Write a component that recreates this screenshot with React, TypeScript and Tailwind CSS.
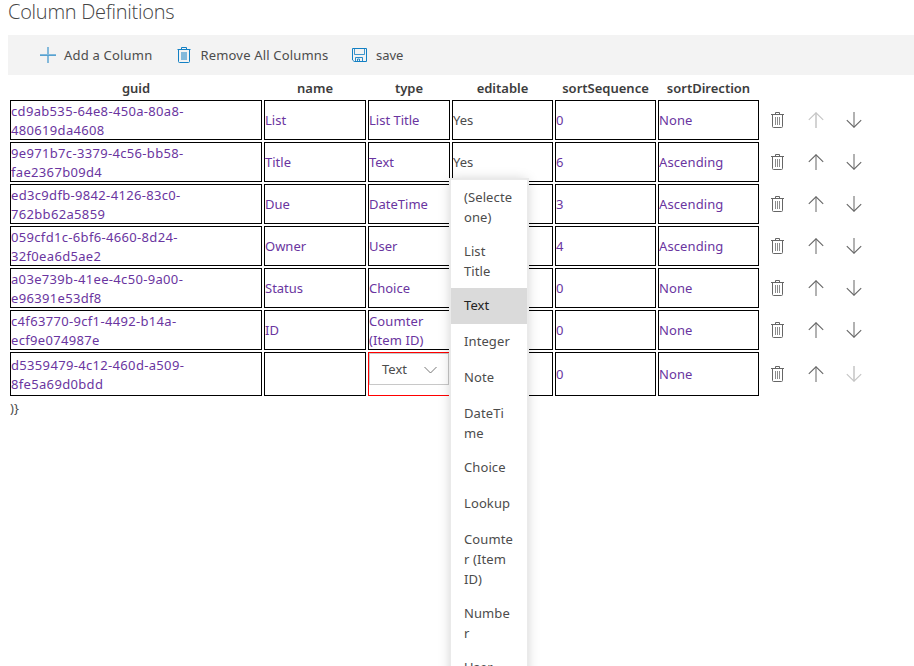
import React from "react";

type Row = { guid: [string, string]; name: string; type: string; editable: string; seq: string; dir: string };

const rows: Row[] = [
  { guid: ["cd9ab535-64e8-450a-80a8-", "480619da4608"], name: "List", type: "List Title", editable: "Yes", seq: "0", dir: "None" },
  { guid: ["9e971b7c-3379-4c56-bb58-", "fae2367b09d4"], name: "Title", type: "Text", editable: "Yes", seq: "6", dir: "Ascending" },
  { guid: ["ed3c9dfb-9842-4126-83c0-", "762bb62a5859"], name: "Due", type: "DateTime", editable: "", seq: "3", dir: "Ascending" },
  { guid: ["059cfd1c-6bf6-4660-8d24-", "32f0ea6d5ae2"], name: "Owner", type: "User", editable: "", seq: "4", dir: "Ascending" },
  { guid: ["a03e739b-41ee-4c50-9a00-", "e96391e53df8"], name: "Status", type: "Choice", editable: "", seq: "0", dir: "None" },
  { guid: ["c4f63770-9cf1-4492-b14a-", "ecf9e074987e"], name: "ID", type: "Coumter (Item ID)", editable: "", seq: "0", dir: "None" },
  { guid: ["d5359479-4c12-460d-a509-", "8fe5a69d0bdd"], name: "", type: "", editable: "", seq: "0", dir: "None" },
];

const options: string[][] = [
  ["(Selecte", "one)"],
  ["List", "Title"],
  ["Text"],
  ["Integer"],
  ["Note"],
  ["DateTi", "me"],
  ["Choice"],
  ["Lookup"],
  ["Coumte", "r (Item", "ID)"],
  ["Numbe", "r"],
  ["User"],
];

const grid = "grid grid-cols-[252px_102px_82px_101px_101px_101px_120px] gap-x-[2px]";

function PlusIcon() {
  return (
    <svg width="16" height="16" viewBox="0 0 16 16" className="shrink-0">
      <path d="M0 7h16v2H0zM7 0h2v16H7z" fill="#1380c4" fillOpacity="0.5" />
      <path d="M0 8h16v1H0z" fill="#1380c4" fillOpacity="0.4" />
    </svg>
  );
}

function TrashFilledIcon() {
  return (
    <svg width="14" height="16" viewBox="0 0 14 16" className="shrink-0" fill="none">
      <path d="M0.5 2.5h13M4.5 2V.5h5V2" stroke="#1380c4" />
      <path d="M1.5 3v11.5q0 1 1 1h9q1 0 1-1V3" stroke="#1380c4" />
      <path d="M4 5h6v8H4z" fill="#1380c4" fillOpacity="0.5" />
    </svg>
  );
}

function SaveIcon() {
  return (
    <svg width="15" height="14" viewBox="0 0 15 14" className="shrink-0" fill="none" stroke="#1380c4">
      <path d="M.5.5h14v13H2.2L.5 12z" />
      <path d="M2.5.5v6h10v-6" strokeOpacity="0.8" />
      <path d="M3.5 13.5v-4h7v4M5.5 13v-2h2v2" strokeOpacity="0.9" />
    </svg>
  );
}

function TrashIcon() {
  return (
    <svg width="13" height="16" viewBox="0 0 13 16" className="shrink-0" fill="none" stroke="#666">
      <path d="M0 2.5h13M4.5 2V.5h4V2" />
      <path d="M1.5 3v11.5q0 1 1 1h8q1 0 1-1V3" />
      <path d="M4.5 5v8M6.5 5v8M8.5 5v8" strokeOpacity="0.75" />
    </svg>
  );
}

function ArrowIcon({ down, faded }: { down?: boolean; faded?: boolean }) {
  return (
    <svg width="16" height="16" viewBox="0 0 16 16" className={"shrink-0 " + (down ? "rotate-180" : "")} fill="none" stroke={faded ? "#c4c4c4" : "#666"}>
      <path d="M8 .8V16" strokeWidth="2" strokeOpacity={faded ? 0.75 : 0.5} />
      <path d="M.8 7.8L8 .8l7.2 7" strokeWidth="1.1" />
    </svg>
  );
}

function Cell({ children, dark }: { children?: React.ReactNode; dark?: boolean }) {
  return (
    <div className={"flex items-center border border-black leading-[19px] " + (dark ? "text-[#4c4c4c]" : "text-[#6a35a0]")}>
      <div>{children}</div>
    </div>
  );
}

export default function App() {
  return (
    <div className="relative h-[666px] w-[914px] overflow-hidden bg-white pl-2 font-['Noto_Sans',sans-serif] text-[13px] text-[#4c4c4c]">
      <h1 className="h-[35px] font-['Open_Sans','Noto_Sans',sans-serif] text-[20px] leading-[23px] font-light tracking-[-0.27px] text-[#444]">
        Column Definitions
      </h1>
      <div className="flex h-10 items-center bg-[#f3f3f3] pl-8">
        <PlusIcon />
        <span className="ml-2 w-[113px] pt-[2px] tracking-[0.2px] whitespace-nowrap">Add a Column</span>
        <TrashFilledIcon />
        <span className="ml-[9.5px] w-[151.5px] pt-[2px] tracking-[0.17px] whitespace-nowrap">Remove All Columns</span>
        <SaveIcon />
        <span className="ml-[9px] pt-[2px]">save</span>
      </div>
      <div className="pl-[2px]">
        <div className={grid + " h-[25px] items-center pt-[2px] text-center font-semibold text-[#3c3c3c]"}>
          {["guid", "name", "type", "editable", "sortSequence", "sortDirection"].map((h) => (
            <div key={h}>{h}</div>
          ))}
        </div>
        <div className="flex flex-col gap-[2px]">
          {rows.map((r, i) => {
            const last = i === rows.length - 1;
            return (
              <div key={i} className={grid + (last ? " grid-rows-[44px]" : " grid-rows-[40px]")}>
                <Cell>
                  <div className={"tracking-[0.33px] whitespace-nowrap " + (last ? "pt-px" : "pt-[2px]")}>
                    {r.guid[0]}
                    <br />
                    {r.guid[1]}
                  </div>
                </Cell>
                <Cell>{r.name}</Cell>
                {last ? (
                  <div className="border border-[#f00]">
                    <div className="flex h-8 items-center justify-between border border-[#c8c8c8] pt-px pr-[11px] pl-3">
                      Text
                      <svg width="13" height="8" viewBox="0 0 13 8" fill="none" stroke="#777">
                        <path d="M.5 1l6 6 6-6" />
                      </svg>
                    </div>
                  </div>
                ) : (
                  <Cell>
                    {r.type === "Coumter (Item ID)" ? <div className="pt-[2px] tracking-[0.1px]">{r.type}</div> : r.type}
                  </Cell>
                )}
                <Cell dark>{r.editable}</Cell>
                <Cell>{r.seq}</Cell>
                <Cell>
                  <span className="tracking-[0.1px]">{r.dir}</span>
                </Cell>
                <div className="flex items-center pl-[10px]">
                  <TrashIcon />
                  <span className="ml-6 flex">
                    <ArrowIcon faded={i === 0} />
                  </span>
                  <span className="ml-[22px] flex">
                    <ArrowIcon down faded={last} />
                  </span>
                </div>
              </div>
            );
          })}
        </div>
        <div className="mt-[3px] leading-[19px]">{")}"}</div>
      </div>
      <div className="absolute top-[178px] left-[449px] w-20 border-2 border-[#eaeaea] bg-white shadow-[0_0_12px_-3px_rgba(0,0,0,0.25)]">
        {options.map((o) => (
          <div
            key={o[0]}
            className={
              "flex flex-col justify-center pl-[13px] leading-5 tracking-[0.1px] whitespace-nowrap " +
              (o.length === 1 ? "h-9 pb-[2px] " : o.length === 2 ? "h-[54px] " : "h-[74px] ") +
              (o[0] === "Text" ? "bg-[#dadada] text-[#222]" : "")
            }
          >
            {o.map((line) => (
              <div key={line}>{line}</div>
            ))}
          </div>
        ))}
      </div>
    </div>
  );
}
